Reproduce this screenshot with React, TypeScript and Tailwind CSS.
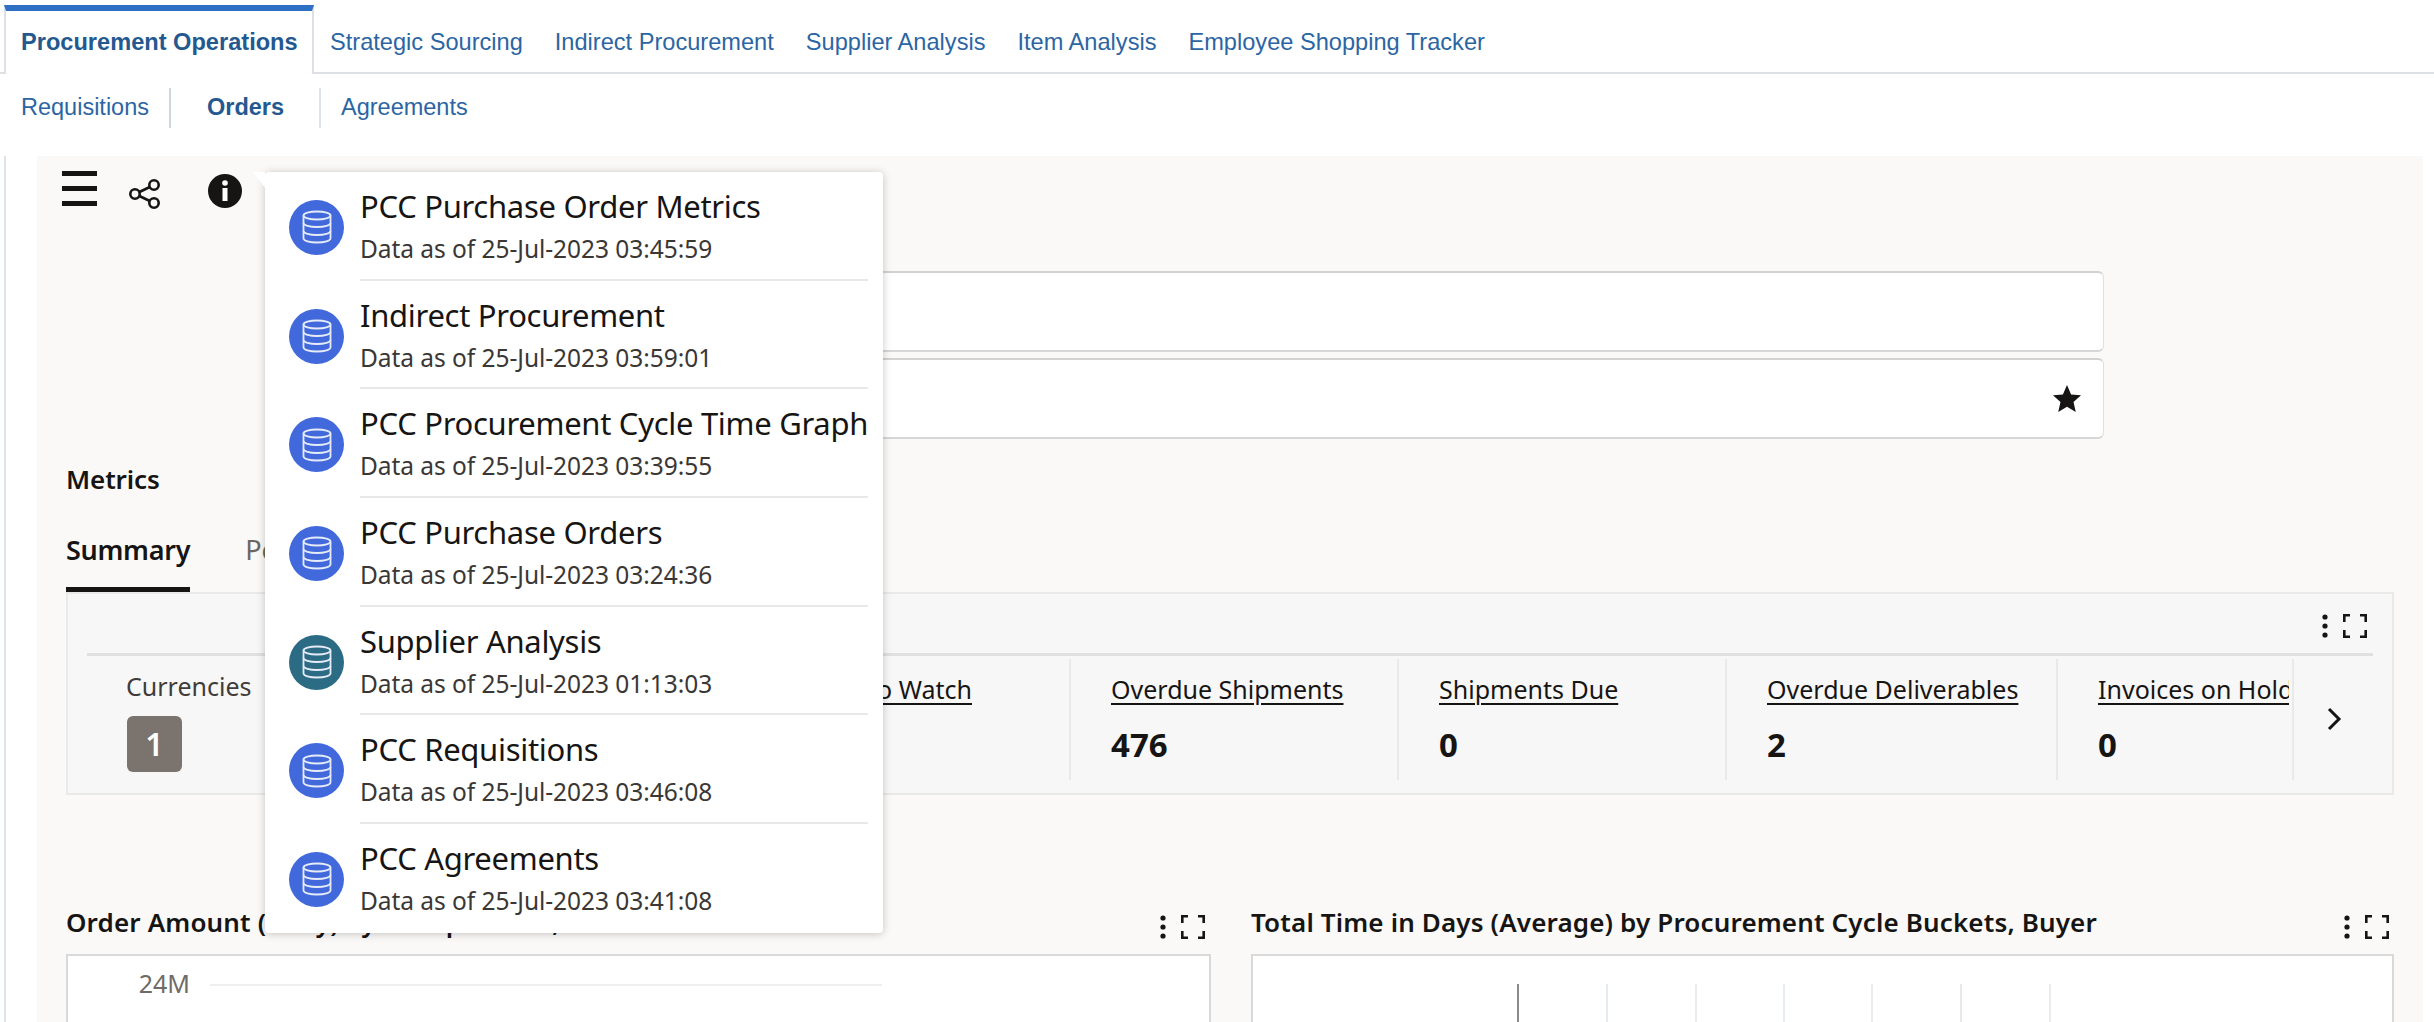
import React from "react";

const F = "[font-family:'Noto_Sans','Open_Sans',sans-serif]";

function Dots() {
  return (
    <svg width="8" height="24" viewBox="0 0 8 24" className="shrink-0">
      <circle cx="4" cy="3" r="2.6" fill="#161513" />
      <circle cx="4" cy="12" r="2.6" fill="#161513" />
      <circle cx="4" cy="21" r="2.6" fill="#161513" />
    </svg>
  );
}

function Corners() {
  return (
    <svg width="24" height="24" viewBox="0 0 24 24" fill="none" stroke="#161513" strokeWidth="2.6" className="shrink-0">
      <path d="M1.3 8V1.3H7M17 1.3h5.7V8M1.3 16v6.7H7M17 22.7h5.7V16" />
    </svg>
  );
}

function Db() {
  return (
    <svg width="30" height="34" viewBox="0 0 30 34" fill="none" stroke="#e6ebf8" strokeWidth="1.8">
      <ellipse cx="15" cy="5.5" rx="13.5" ry="4" />
      <path d="M1.5 5.5v23c0 2.2 6 4 13.500 4s13.500-1.800 13.500-4v-23" />
      <path d="M1.500 13c0 2.200 6 4 13.500 4s13.500-1.800 13.500-4" />
      <path d="M1.500 21c0 2.200 6 4 13.500 4s13.500-1.800 13.500-4" />
    </svg>
  );
}

const items = [
  ["PCC Purchase Order Metrics", "Data as of 25-Jul-2023 03:45:59", false],
  ["Indirect Procurement", "Data as of 25-Jul-2023 03:59:01", false],
  ["PCC Procurement Cycle Time Graph", "Data as of 25-Jul-2023 03:39:55", false],
  ["PCC Purchase Orders", "Data as of 25-Jul-2023 03:24:36", false],
  ["Supplier Analysis", "Data as of 25-Jul-2023 01:13:03", true],
  ["PCC Requisitions", "Data as of 25-Jul-2023 03:46:08", false],
  ["PCC Agreements", "Data as of 25-Jul-2023 03:41:08", false],
] as const;

function Metric({ label, value, width }: { label: string; value: string; width: string }) {
  return (
    <div className={`${width} h-[121px] shrink-0 border-r-2 border-[#e9e9e9] pl-[40px] pr-[3px]`}>
      <div className="h-[56px] pt-[9px] text-[25px] leading-[42px] text-[#161513] underline decoration-2 underline-offset-[4px] whitespace-nowrap overflow-hidden">
        {label}
      </div>
      <div className="mt-[7px] text-[33px] leading-[46px] font-bold text-[#161513]">{value}</div>
    </div>
  );
}

export default function App() {
  return (
    <div className={`relative w-[2434px] h-[1022px] overflow-hidden bg-white ${F}`}>
      <div className="[font-family:'Liberation_Sans',Arial,sans-serif] text-[24px] text-[#2c65a3]">
        <div className="flex h-[74px] pt-[5px] border-b-2 border-[#dde1e6] text-[23.600px]">
          <div className="ml-[4px] w-[310px] h-[69px] -mb-[2px] bg-white border-t-[6px] border-t-[#2e70c4] border-x-2 border-[#dde1e6] border-b-0 pl-[15px] pt-[3px] font-bold text-[#24598f] leading-[56px] whitespace-nowrap">
            Procurement Operations
          </div>
          <div className="flex gap-[32px] pl-[16px] pt-[9px] leading-[56px] whitespace-nowrap">
            <span>Strategic Sourcing</span>
            <span>Indirect Procurement</span>
            <span>Supplier Analysis</span>
            <span>Item Analysis</span>
            <span>Employee Shopping Tracker</span>
          </div>
        </div>
        <div className="flex items-center h-[40px] mt-[14px] ml-[21px] whitespace-nowrap text-[23.500px]">
          <span className="w-[150px] h-[40px] leading-[38px] border-r-2 border-[#cfd6de]">Requisitions</span>
          <span className="w-[150px] h-[40px] pl-[36px] leading-[38px] font-bold text-[#24598f] border-r-2 border-[#dfe4ea]">Orders</span>
          <span className="pl-[20px] h-[40px] leading-[38px]">Agreements</span>
        </div>
      </div>

      <div className="ml-[4px] h-[882px] mt-[28px] border-l-2 border-[#dbe3ec] pl-[31px]">
        <div className="w-[2386px] h-[866px] bg-[#faf9f7] pl-[29px]">
          <div className="flex h-[115px] items-start -ml-[5px]">
            <div className="flex flex-col gap-[10px] w-[35px] mt-[15px] ml-[1px]">
              <div className="h-[5px] bg-[#161513]" />
              <div className="h-[5px] bg-[#161513]" />
              <div className="h-[5px] bg-[#161513]" />
            </div>
            <svg className="ml-[32px] mt-[23px]" width="32" height="30" viewBox="0 0 32 30" fill="none" stroke="#161513" strokeWidth="2.6">
              <circle cx="6" cy="15" r="4.700" />
              <circle cx="25" cy="6" r="4.700" />
              <circle cx="25" cy="24" r="4.700" />
              <path d="M10.400 13L20.800 8M10.400 17L20.800 22" />
            </svg>
            <svg className="ml-[47px] mt-[18px]" width="34" height="34" viewBox="0 0 34 34">
              <circle cx="17" cy="17" r="17" fill="#161513" />
              <circle cx="17" cy="9" r="2.800" fill="#fff" />
              <rect x="14.500" y="14" width="5" height="13" fill="#fff" />
            </svg>
          </div>

          <div className="flex flex-col gap-[6px] ml-[234px] w-[1804px]">
            <div className="h-[81px] bg-white rounded-[6px] border border-[#e0e0e0] border-t-2 border-t-[#d2d2d2] border-b-2 border-b-[#d6d6d6]" />
            <div className="h-[81px] bg-white rounded-[6px] border border-[#e0e0e0] border-t-2 border-t-[#d2d2d2] border-b-2 border-b-[#d6d6d6] flex items-center justify-end pr-[22px]">
              <svg width="28" height="27" viewBox="0 0 24 23" fill="#161513">
                <path d="M12 0l3.500 8 8.500.8-6.400 5.700 1.900 8.500L12 18.500 4.500 23l1.900-8.500L0 8.800 8.500 8z" />
              </svg>
            </div>
          </div>

          <div className="mt-[20px] h-[40px] text-[26px] leading-[40px] font-semibold text-[#161513] tracking-[-0.1px]">Metrics</div>

          <div className="flex mt-[29px] h-[64px] text-[27px] font-semibold text-[#161513]">
            <span className="h-[64px] leading-[43px] border-b-[5px] border-[#161513] tracking-[-0.3px]">Summary</span>
            <span className="ml-[55px] leading-[43px] font-normal text-[#6b6763]">Performance</span>
          </div>

          <div className="w-[2328px] h-[203px] bg-[#f7f7f7] border-2 border-[#e9e9e7] px-[19px]">
            <div className="flex justify-end items-center gap-[14px] h-[62px] pt-[4px] pr-[6px] border-b-[3px] border-[#e0e0e0]">
              <Dots />
              <Corners />
            </div>
            <div className="flex pt-[3px]">
              <div className="w-[613px] h-[121px] shrink-0 flex overflow-hidden">
                <div className="pl-[39px] w-[300px] text-[25px] text-[#3f3c39]">
                  <div className="pt-[6px] leading-[42px]">Currencies</div>
                  <div className="mt-[9px] ml-px w-[55px] h-[56px] rounded-[6px] bg-[#7a736e] text-white text-[32px] font-semibold flex items-center justify-center">1</div>
                </div>
              </div>
              <div className="w-[371px] h-[121px] shrink-0 border-r-2 border-[#e9e9e9] flex justify-end pr-[97px] overflow-hidden">
                <span className="mt-[9px] h-[46px] text-[25px] leading-[42px] underline decoration-2 underline-offset-[4px] text-[#161513] whitespace-nowrap">Orders to Watch</span>
              </div>
              <Metric label="Overdue Shipments" value="476" width="w-[328px]" />
              <Metric label="Shipments Due" value="0" width="w-[328px]" />
              <Metric label="Overdue Deliverables" value="2" width="w-[331px]" />
              <Metric label="Invoices on Hold" value="0" width="w-[236px]" />
              <div className="flex-1 flex items-center justify-center pb-[2px]">
                <svg width="16" height="24" viewBox="0 0 16 24" fill="none" stroke="#161513" strokeWidth="3">
                  <path d="M3 2l10 10L3 22" />
                </svg>
              </div>
            </div>
          </div>

          <div className="flex w-[2328px] gap-[40px] mt-[107px]">
            <div className="w-[1145px] shrink-0">
              <div className="flex items-center justify-between h-[52px] pr-[6px]">
                <span className="text-[26px] pb-[12px] font-semibold text-[#161513] whitespace-nowrap tracking-[0.15px]">Order Amount (Daily) by Group Period, Month</span>
                <div className="flex items-center gap-[14px] mb-[2px]"><Dots /><Corners /></div>
              </div>
              <div className="h-[80px] bg-white border-2 border-[#d9d9d9] border-b-0 pt-[8px] flex items-start">
                <span className="w-[122px] text-right text-[25px] leading-[38px] text-[#6f6b67]">24M</span>
                <svg className="ml-[20px] mt-[20px]" width="672" height="2" viewBox="0 0 672 2">
                  <rect width="672" height="2" fill="#efefef" />
                </svg>
              </div>
            </div>
            <div className="w-[1143px] shrink-0">
              <div className="flex items-center justify-between h-[52px] pr-[5px]">
                <span className="text-[26px] pb-[12px] font-semibold text-[#161513] whitespace-nowrap tracking-[0.15px]">Total Time in Days (Average) by Procurement Cycle Buckets, Buyer</span>
                <div className="flex items-center gap-[14px] mb-[2px]"><Dots /><Corners /></div>
              </div>
              <div className="h-[80px] bg-white border-2 border-[#d9d9d9] border-b-0 pt-[28px]">
                <svg width="1140" height="40" viewBox="0 0 1140 40">
                  <rect x="264" width="2" height="40" fill="#8a8a8a" />
                  <rect x="353" width="2" height="40" fill="#e6ebf0" />
                  <rect x="442" width="2" height="40" fill="#e9ebee" />
                  <rect x="530" width="2" height="40" fill="#e6ebf0" />
                  <rect x="618" width="2" height="40" fill="#e9ebee" />
                  <rect x="707" width="2" height="40" fill="#e6e8eb" />
                  <rect x="796" width="2" height="40" fill="#e9ebee" />
                </svg>
              </div>
            </div>
          </div>
        </div>
      </div>

      <div className="absolute left-[265px] top-[172px] w-[618px] h-[761px] bg-white rounded-[4px] shadow-[0_1px_8px_rgba(0,0,0,0.22)] pl-[24px] pr-[15px]">
        <div className="absolute -left-[12px] top-0 w-0 h-0 border-t-[16px] border-t-white border-l-[12px] border-l-transparent" />
        {items.map(([title, date, teal], i) => (
          <div key={title} className="flex items-center h-[108.700px] pt-[2px]">
            <div className={`w-[55px] h-[55px] shrink-0 rounded-full flex items-center justify-center ${teal ? "bg-[#2c6b84]" : "bg-[#4169dc]"}`}>
              <Db />
            </div>
            <div className={`ml-[16px] flex-1 h-full pt-[9px] ${i < items.length - 1 ? "border-b-2 border-[#e8e8e8]" : ""}`}>
              <div className="text-[31px] leading-[46px] text-[#161513] whitespace-nowrap tracking-[-0.3px]">{title}</div>
              <div className="text-[24.500px] leading-[37px] pt-px text-[#3a3734] whitespace-nowrap tracking-[-0.05px]">{date}</div>
            </div>
          </div>
        ))}
      </div>
    </div>
  );
}
